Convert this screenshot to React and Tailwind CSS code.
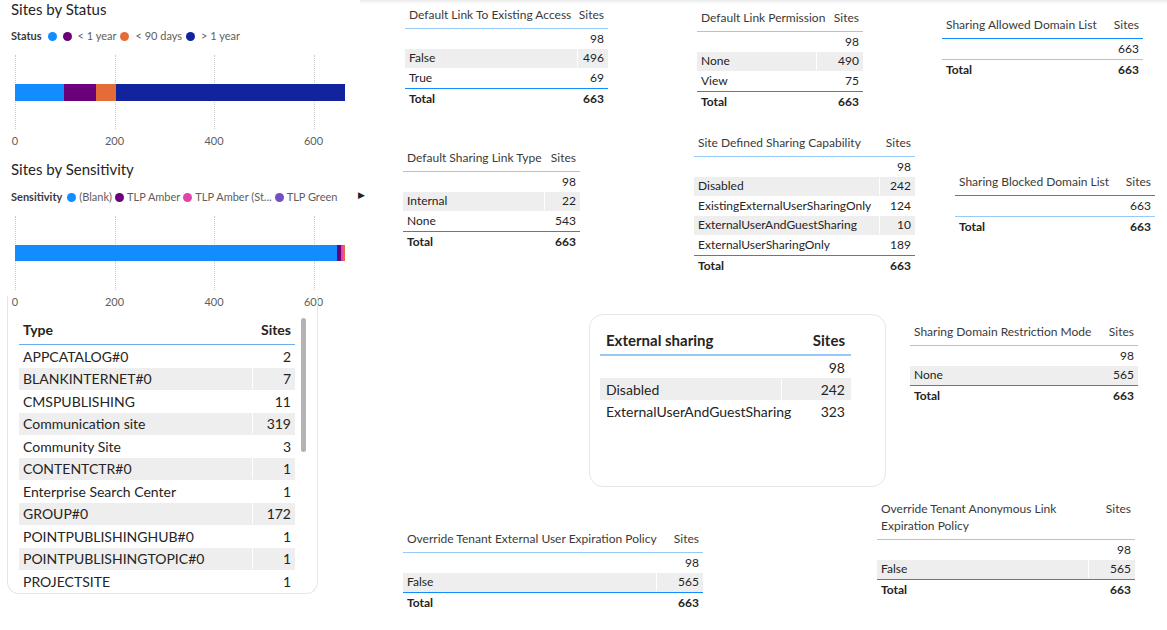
const F = { fontFamily: "Lato, 'Open Sans', sans-serif" };

function Table({ x, y, w, c2, title, rows, total, strongHeader, sep = true }) {
  const titleLines = Array.isArray(title) ? title : [title];
  const hh = titleLines.length > 1 ? 40 : 23;
  return (
    <div className="absolute text-[12px] text-[#252423]" style={{ left: x, top: y, width: w }}>
      <div
        className={"flex justify-between px-[4px] border-b " + (strongHeader ? "border-[#118DFF]" : "border-[#99c9f7]")}
        style={{ height: hh }}
      >
        <div className="leading-[17px] text-[#3b3a39]">
          {titleLines.map((t) => (
            <div key={t}>{t}</div>
          ))}
        </div>
        <div className="leading-[17px] text-[#3b3a39]">Sites</div>
      </div>
      <div className={"border-b " + (strongHeader ? "border-[#99c9f7]" : "border-[#118DFF]")}>
        {rows.map(([l, v], i) => (
          <div key={i} className={"flex h-[19.5px] items-center " + (i % 2 === 1 ? "bg-[#eeeeee]" : "")}>
            <div className={"flex-1 px-[4px] truncate " + (sep && i % 2 === 1 ? "border-r border-white" : "")}>{l}</div>
            <div className="px-[4px] text-right" style={{ width: c2 }}>{v}</div>
          </div>
        ))}
      </div>
      <div className="flex h-[20px] items-center justify-between px-[4px] font-bold">
        <span>Total</span>
        <span>{total}</span>
      </div>
    </div>
  );
}

function Axis({ top }) {
  const ticks = [0, 200, 400, 600];
  return (
    <div className="absolute left-0 w-[360px]" style={{ top }}>
      {ticks.map((t, i) => (
        <div key={t}>
          <div className="absolute top-0 h-[74px] border-l border-dotted border-[#c8c8c8]" style={{ left: 15 + i * 99.5 }} />
          <div className="absolute top-[78px] text-[11px] text-[#605e5c] -translate-x-1/2" style={{ left: 15 + i * 99.5 }}>
            {t}
          </div>
        </div>
      ))}
    </div>
  );
}

function Dot({ c }) {
  return <span className="inline-block w-[9px] h-[9px] rounded-full mr-[2px]" style={{ background: c }} />;
}

export default function App() {
  const seg = (v) => (v * 99.5) / 200;
  const status = [
    [98, "#118DFF"],
    [65, "#6B007B"],
    [40, "#E66C37"],
    [460, "#12239E"],
  ];
  const sens = [
    [647, "#118DFF"],
    [9, "#6B007B"],
    [3, "#E044A7"],
    [4, "#E66C37"],
  ];
  const types = [
    ["APPCATALOG#0", 2],
    ["BLANKINTERNET#0", 7],
    ["CMSPUBLISHING", 11],
    ["Communication site", 319],
    ["Community Site", 3],
    ["CONTENTCTR#0", 1],
    ["Enterprise Search Center", 1],
    ["GROUP#0", 172],
    ["POINTPUBLISHINGHUB#0", 1],
    ["POINTPUBLISHINGTOPIC#0", 1],
    ["PROJECTSITE", 1],
  ];
  return (
    <div className="relative w-[1167px] h-[630px] bg-white overflow-hidden" style={F}>
      <div className="absolute left-[360px] top-0 right-0 h-[4px] bg-gradient-to-b from-[#ebebeb] to-white" />

      {/* Sites by Status */}
      <div className="absolute left-[11px] top-[-2px] text-[15px] text-[#252423]">Sites by Status</div>
      <div className="absolute left-[11px] top-[28px] flex items-center gap-[4px] text-[11px] text-[#605e5c]">
        <b className="text-[#3b3a39] mr-[2px]">Status</b>
        <Dot c="#118DFF" />
        <Dot c="#6B007B" />
        <span>&lt; 1 year</span>
        <Dot c="#E66C37" />
        <span>&lt; 90 days</span>
        <Dot c="#12239E" />
        <span>&gt; 1 year</span>
      </div>
      <Axis top={55} />
      <div className="absolute left-[15px] top-[84px] h-[17px] flex">
        {status.map(([v, c], i) => (
          <div key={i} className="h-full" style={{ width: seg(v), background: c }} />
        ))}
      </div>

      {/* Sites by Sensitivity */}
      <div className="absolute left-[11px] top-[158px] text-[15px] text-[#252423]">Sites by Sensitivity</div>
      <div className="absolute left-[11px] top-[189px] flex items-center gap-[1px] text-[11px] text-[#605e5c] whitespace-nowrap">
        <b className="text-[#3b3a39] mr-[4px]">Sensitivity</b>
        <Dot c="#118DFF" />
        <span className="mr-[2px]">(Blank)</span>
        <Dot c="#6B007B" />
        <span className="mr-[2px]">TLP Amber</span>
        <Dot c="#E044A7" />
        <span className="mr-[2px]">TLP Amber (St...</span>
        <Dot c="#744EC2" />
        <span>TLP Green</span>
      </div>
      <div className="absolute left-[358px] top-[188px] text-[9px] text-[#252423]">▶</div>
      <Axis top={216} />
      <div className="absolute left-[15px] top-[245px] h-[16px] flex">
        {sens.map(([v, c], i) => (
          <div key={i} className="h-full" style={{ width: seg(v), background: c }} />
        ))}
      </div>

      {/* Type table card */}
      <div className="absolute left-[7px] top-[296px] w-[311px] h-[298px] rounded-b-[12px] border border-t-0 border-[#e6e6e6] overflow-hidden text-[14px] text-[#252423]">
        <div className="absolute left-[293px] top-[22px] w-[5px] h-[134px] rounded-full bg-[#b3b3b3]" />
        <div className="ml-[11px] w-[276px] mt-[19px]">
          <div className="flex justify-between items-center h-[30px] border-b border-[#6aaef0] font-bold px-[4px]">
            <span>Type</span>
            <span>Sites</span>
          </div>
          {types.map(([l, v], i) => (
            <div key={l} className={"flex h-[22.5px] items-center " + (i % 2 === 1 ? "bg-[#eeeeee]" : "")}>
              <div className={"flex-1 px-[4px] " + (i % 2 === 1 ? "border-r border-white" : "")}>{l}</div>
              <div className="w-[42px] text-right px-[4px]">{v}</div>
            </div>
          ))}
        </div>
      </div>

      <Table x={405} y={6} w={203} c2={30} title="Default Link To Existing Access" rows={[["", 98], ["False", 496], ["True", 69]]} total={663} />
      <Table x={697} y={9} w={166} c2={46} title="Default Link Permission" rows={[["", 98], ["None", 490], ["View", 75]]} total={663} />
      <Table x={942} y={16} w={201} c2={40} title="Sharing Allowed Domain List" rows={[["", 663]]} total={663} strongHeader />
      <Table x={403} y={149} w={177} c2={35} title="Default Sharing Link Type" rows={[["", 98], ["Internal", 22], ["None", 543]]} total={663} />
      <Table x={694} y={134} w={221} c2={35} title="Site Defined Sharing Capability" rows={[["", 98], ["Disabled", 242], ["ExistingExternalUserSharingOnly", 124], ["ExternalUserAndGuestSharing", 10], ["ExternalUserSharingOnly", 189]]} total={663} />
      <Table x={955} y={173} w={200} c2={40} title="Sharing Blocked Domain List" rows={[["", 663]]} total={663} strongHeader />
      <Table x={910} y={323} w={228} c2={40} title="Sharing Domain Restriction Mode" rows={[["", 98], ["None", 565]]} total={663} sep={false} />
      <Table x={403} y={530} w={300} c2={46} title="Override Tenant External User Expiration Policy" rows={[["", 98], ["False", 565]]} total={663} />
      <Table x={877} y={500} w={258} c2={46} title={["Override Tenant Anonymous Link", "Expiration Policy"]} rows={[["", 98], ["False", 565]]} total={663} />

      {/* External sharing card */}
      <div className="absolute left-[589px] top-[314px] w-[297px] h-[173px] rounded-[14px] border border-[#e6e6e6] text-[14px] text-[#252423]">
        <div className="ml-[10px] mt-[12px] w-[251px]">
          <div className="flex justify-between items-center h-[29px] border-b-2 border-[#99c9f7] px-[6px] text-[15px] font-bold">
            <span>External sharing</span>
            <span>Sites</span>
          </div>
          {[["", 98], ["Disabled", 242], ["ExternalUserAndGuestSharing", 323]].map(([l, v], i) => (
            <div key={i} className={"flex h-[22px] items-center " + (i === 1 ? "bg-[#eeeeee]" : "")}>
              <div className={"flex-1 px-[6px] " + (i === 1 ? "border-r border-white" : "")}>{l}</div>
              <div className="w-[69px] text-right px-[6px]">{v}</div>
            </div>
          ))}
        </div>
      </div>
    </div>
  );
}
